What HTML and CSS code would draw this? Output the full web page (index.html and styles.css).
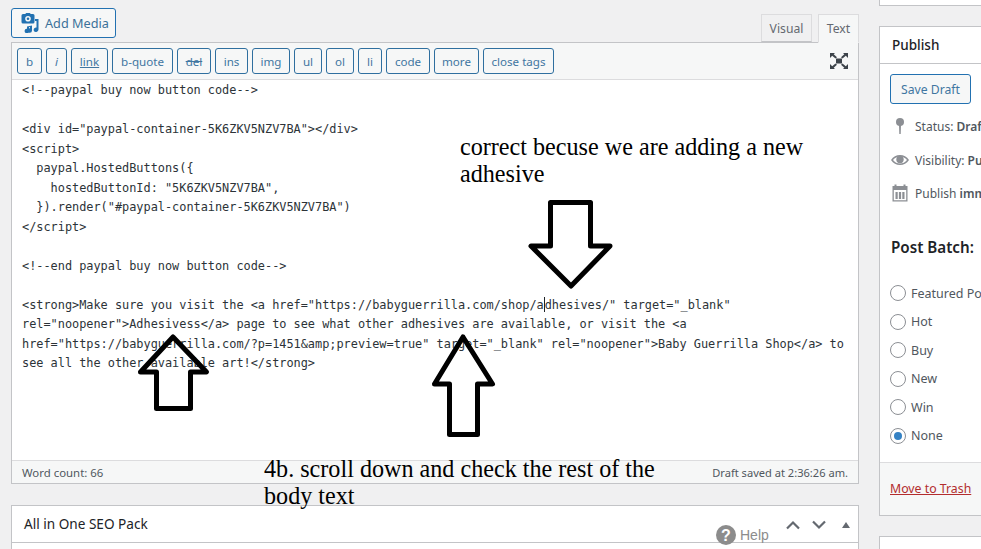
FILE: index.html
```html
<!DOCTYPE html>
<html lang="en">
<head>
<meta charset="utf-8">
<title>Edit Post</title>
<link rel="stylesheet" href="styles.css">
</head>
<body>
<div class="page">
  <main class="main">
    <div class="editor-head">
      <button class="btn add-media">
        <svg class="media-icon" viewBox="0 0 20 20" width="20" height="20"><path fill="#2271b1" d="M3 1h2.200l1-1h3.600l1 1H13a1.500 1.500 0 0 1 1.500 1.500V9a1.500 1.500 0 0 1-1.500 1.500H3A1.500 1.500 0 0 1 1.500 9V2.500A1.500 1.500 0 0 1 3 1zm5 2a2.800 2.800 0 1 0 0 5.600A2.800 2.800 0 0 0 8 3z"/><circle cx="8" cy="5.800" r="1.300" fill="#2271b1"/><path fill="#2271b1" d="M15 6h3.500v10.500a2.500 2.500 0 0 1-4.800 1 2.500 2.500 0 0 1 2.800-3V8H15zM7 13.500l5-1v5a2.200 2.200 0 1 1-2-2.200v-1.300l-1 .2V18a2.200 2.200 0 1 1-2-2.200z"/></svg>
        Add Media
      </button>
      <div class="tabs">
        <span class="tab tab-visual">Visual</span>
        <span class="tab tab-text">Text</span>
      </div>
    </div>
    <section class="editor">
      <div class="toolbar">
        <div class="qt-buttons">
          <button class="qt w-b">b</button>
          <button class="qt w-i"><i>i</i></button>
          <button class="qt w-link"><u>link</u></button>
          <button class="qt w-quote">b-quote</button>
          <button class="qt w-del"><s>del</s></button>
          <button class="qt w-ins">ins</button>
          <button class="qt w-img">img</button>
          <button class="qt w-ul">ul</button>
          <button class="qt w-ol">ol</button>
          <button class="qt w-li">li</button>
          <button class="qt w-code">code</button>
          <button class="qt w-more">more</button>
          <button class="qt w-close">close tags</button>
        </div>
        <svg class="fullscreen" viewBox="0 0 18 16" width="18" height="16"><path fill="#3c434a" d="M0 0h5L3.700 1.300 7 4.200 5.500 5.600 2.200 2.700 0 5zM18 0h-5l1.300 1.300L11 4.200l1.500 1.400 3.300-2.900L18 5zM0 16h5l-1.300-1.300L7 11.800l-1.500-1.400-3.300 2.900L0 11zM18 16h-5l1.300-1.300-3.300-2.900 1.500-1.400 3.300 2.900L18 11zM6 5.500h6v5H6z"/></svg>
      </div>
      <pre class="code">&lt;!--paypal buy now button code--&gt;

&lt;div id="paypal-container-5K6ZKV5NZV7BA"&gt;&lt;/div&gt;
&lt;script&gt;
  paypal.HostedButtons({
    hostedButtonId: "5K6ZKV5NZV7BA",
  }).render("#paypal-container-5K6ZKV5NZV7BA")
&lt;/script&gt;

&lt;!--end paypal buy now button code--&gt;

&lt;strong&gt;Make sure you visit the &lt;a href="https://babyguerrilla.com/shop/a<span class="caret"></span>dhesives/" target="_blank"
rel="noopener"&gt;Adhesivess&lt;/a&gt; page to see what other adhesives are available, or visit the &lt;a
href="https://babyguerrilla.com/?p=1451&amp;amp;preview=true" target="_blank" rel="noopener"&gt;Baby Guerrilla Shop&lt;/a&gt; to
see all the other available art!&lt;/strong&gt;</pre>
      <div class="status">
        <span class="word-count">Word count: 66</span>
        <span class="saved">Draft saved at 2:36:26 am.</span>
      </div>
    </section>
    <section class="seo">
      <h2 class="seo-title">All in One SEO Pack</h2>
      <div class="seo-controls">
        <svg viewBox="0 0 14 10" width="14" height="10"><path d="M1 8.500 7 2.500l6 6" fill="none" stroke="#646970" stroke-width="2.200"/></svg>
        <svg class="ctl-down" viewBox="0 0 14 10" width="14" height="10"><path d="M1 1.500l6 6 6-6" fill="none" stroke="#646970" stroke-width="2.200"/></svg>
        <svg class="ctl-tri" viewBox="0 0 8 6" width="8" height="6"><path d="M4 0l4 6H0z" fill="#646970"/></svg>
      </div>
    </section>
  </main>
  <aside class="side">
    <div class="box-stub"></div>
    <section class="publish">
      <h2 class="publish-title">Publish</h2>
      <div class="publish-body">
        <button class="btn save-draft">Save Draft</button>
        <div class="meta meta-status">
          <svg class="meta-icon" viewBox="0 0 20 20" width="20" height="20"><circle cx="10" cy="6" r="4" fill="#8c8f94"/><path d="M9 8h2l-.3 10H9.300z" fill="#8c8f94"/></svg>
          <span>Status: <b>Draft</b> Edit</span>
        </div>
        <div class="meta meta-vis">
          <svg class="meta-icon" viewBox="0 0 20 20" width="20" height="20"><path fill="#8c8f94" d="M1 10c2.200-3.400 5.300-5 9-5s6.800 1.600 9 5c-2.200 3.400-5.300 5-9 5s-6.800-1.600-9-5zm2 0c1.800 2.300 4.200 3.600 7 3.600s5.200-1.300 7-3.600c-1.800-2.300-4.200-3.600-7-3.600S4.800 7.700 3 10z"/><circle cx="10" cy="9.500" r="3.700" fill="#8c8f94"/></svg>
          <span>Visibility: <b>Public</b> Edit</span>
        </div>
        <div class="meta meta-date">
          <svg class="meta-icon" viewBox="0 0 20 20" width="20" height="20"><path fill="#8c8f94" d="M2.500 3h2V1.500h2V3h7V1.500h2V3h2v15.500h-15zm1.300 4v10.200h12.400V7zM5.500 9h2.200v7H5.500zm3.400 0h2.200v7H8.900zm3.400 0h2.200v7h-2.200z"/></svg>
          <span>Publish <b>immediately</b> Edit</span>
        </div>
        <h3 class="batch-title">Post Batch:</h3>
        <form class="batch">
          <label class="radio"><input type="radio" name="batch">Featured Post</label>
          <label class="radio"><input type="radio" name="batch">Hot</label>
          <label class="radio"><input type="radio" name="batch">Buy</label>
          <label class="radio"><input type="radio" name="batch">New</label>
          <label class="radio"><input type="radio" name="batch">Win</label>
          <label class="radio"><input type="radio" name="batch" checked>None</label>
        </form>
      </div>
      <div class="publish-foot"><a class="trash" href="#">Move to Trash</a></div>
    </section>
    <div class="box-next"></div>
  </aside>
  <p class="note note-top">correct becuse we are adding a new adhesive</p>
  <p class="note note-bottom">4b. scroll down and check the rest of the body text</p>
  <svg class="arrows" viewBox="0 0 981 549" width="981" height="549">
    <path d="M550.500 202.500H590.500V246H610L571 286 531 246H550.500Z"/>
    <path d="M463 337 492.500 384H477.500V434.500H449.500V384H434.500Z"/>
    <path d="M173 337 206.500 372H190.500V408.500H156.500V372H140.500Z"/>
  </svg>
  <div class="help">
    <svg viewBox="0 0 20 20" width="20" height="20"><circle cx="10" cy="10" r="10" fill="#8c8c8c"/><text x="10" y="15.500" text-anchor="middle" class="help-q">?</text></svg>
    <span>Help</span>
  </div>
</div>
</body>
</html>
```

FILE: styles.css
```css
* { box-sizing: border-box; }
html, body { margin: 0; padding: 0; height: 100%; }
body {
  background: #f0f0f1;
  color: #3c434a;
  font-family: "Noto Sans", "Open Sans", sans-serif;
  font-size: 13px;
  overflow: hidden;
}
.page {
  position: relative;
  display: flex;
  width: 981px;
  height: 549px;
  overflow: hidden;
  padding-left: 11px;
}
.main { flex: 0 0 848px; padding-top: 8px; }
.btn {
  font: inherit;
  color: #2271b1;
  background: #f6f7f7;
  border: 1px solid #2271b1;
  border-radius: 3px;
  padding: 0;
}
.editor-head {
  display: flex;
  justify-content: space-between;
  align-items: flex-end;
  height: 35px;
  position: relative;
  z-index: 1;
}
.add-media {
  display: flex;
  align-items: center;
  gap: 5px;
  width: 105px;
  height: 30px;
  padding-left: 8px;
  align-self: flex-start;
  color: #3b7199;
  font-size: 12.700px;
}
.media-icon { flex: none; }
.tabs { display: flex; gap: 6px; align-items: flex-end; }
.tab {
  display: flex;
  align-items: center;
  justify-content: center;
  border: 1px solid #dcdcde;
  color: #646970;
  font-size: 12.200px;
}
.tab-visual { width: 51px; height: 28px; background: #f0f0f1; margin-bottom: 1px; border-bottom-color: #c3c4c7; }
.tab-text { width: 41px; height: 29px; background: #f6f7f7; border-color: #dcdcde #dcdcde #f6f7f7; }
.editor {
  border: 1px solid #c3c4c7;
  background: #fff;
  height: 442px;
  margin-top: -1px;
  display: flex;
  flex-direction: column;
}
.toolbar {
  flex: none;
  height: 37px;
  background: #f6f7f7;
  border-bottom: 1px solid #dcdcde;
  display: flex;
  justify-content: space-between;
  align-items: center;
  padding: 0 10px 0 5px;
}
.qt-buttons { display: flex; gap: 4px; }
.qt {
  font: inherit;
  font-size: 11.600px;
  height: 26px;
  padding: 0;
  color: #3f76a1;
  background: #f6f7f7;
  border: 1px solid #2f6f9f;
  border-radius: 3px;
}
.w-b { width: 25px; }
.w-i { width: 21px; }
.w-link { width: 37px; }
.w-quote { width: 61px; }
.w-del { width: 34px; }
.w-ins { width: 33px; }
.w-img { width: 38px; }
.w-ul { width: 28px; }
.w-ol { width: 28px; }
.w-li { width: 24px; }
.w-code { width: 44px; }
.w-more { width: 45px; }
.w-close { width: 71px; }
.code {
  flex: 1;
  margin: 0;
  padding: 1px 0 0 10px;
  font-family: "DejaVu Sans Mono", "Liberation Mono", monospace;
  font-size: 11.900px;
  letter-spacing: -0.012px;
  line-height: 19.500px;
  color: #2c3338;
  white-space: pre;
  overflow: hidden;
}
.caret {
  display: inline-block;
  width: 0;
  height: 15px;
  border-left: 1px solid #1d2327;
  vertical-align: -3px;
}
.status {
  flex: none;
  height: 23px;
  background: #f6f7f7;
  border-top: 1px solid #dcdcde;
  display: flex;
  justify-content: space-between;
  align-items: center;
  padding: 0 10px;
  color: #50575e;
}
.word-count { font-size: 11.400px; }
.saved { font-size: 11.100px; }
.seo {
  position: relative;
  margin-top: 21px;
  height: 60px;
  background: #fff;
  border: 1px solid #c3c4c7;
}
.seo-title {
  margin: 0;
  height: 37px;
  padding: 0 12px 2px;
  display: flex;
  align-items: center;
  font-size: 13.600px;
  font-weight: 400;
  color: #1d2327;
  border-bottom: 1px solid #c3c4c7;
}
.seo-controls {
  position: absolute;
  top: 14px;
  right: 8px;
  display: flex;
  align-items: center;
}
.ctl-down { margin-left: 12px; }
.ctl-tri { margin-left: 16px; }
.side { flex: 0 0 280px; margin-left: 20px; }
.box-stub {
  height: 6px;
  background: #fff;
  border: 1px solid #c3c4c7;
  border-top: 0;
}
.publish {
  margin-top: 20px;
  height: 490px;
  background: #fff;
  border: 1px solid #c3c4c7;
  display: flex;
  flex-direction: column;
}
.publish-title {
  margin: 0;
  height: 37px;
  flex: none;
  padding: 0 12px;
  display: flex;
  align-items: center;
  font-size: 13.500px;
  font-weight: 500;
  color: #1d2327;
  border-bottom: 1px solid #c3c4c7;
}
.publish-body { flex: 1; padding: 10px; }
.save-draft {
  display: block;
  width: 81px;
  height: 30px;
  color: #3f76a1;
  font-size: 12.200px;
}
.meta {
  display: flex;
  align-items: center;
  gap: 5px;
  height: 20px;
  white-space: nowrap;
  font-size: 12px;
  color: #50575e;
}
.meta b { font-weight: 600; }
.meta-icon { flex: none; }
.meta-status { margin-top: 12px; }
.meta-vis { margin-top: 14px; }
.meta-date { margin-top: 13px; }
.batch-title {
  margin: 34px 0 0 1px;
  font-size: 15.200px;
  line-height: 20px;
  font-weight: 600;
  color: #1d2327;
}
.batch {
  margin-top: 26px;
  display: flex;
  flex-direction: column;
  gap: 8.600px;
}
.radio {
  display: flex;
  align-items: center;
  gap: 5px;
  height: 20px;
  white-space: nowrap;
  color: #50575e;
  font-size: 12.500px;
}
.radio input {
  appearance: none;
  margin: 0;
  width: 16px;
  height: 16px;
  border: 1px solid #8c8f94;
  border-radius: 50%;
  background: #fff;
  display: grid;
  place-items: center;
}
.radio input:checked::before {
  content: "";
  width: 8px;
  height: 8px;
  border-radius: 50%;
  background: #3582c4;
}
.publish-foot {
  flex: none;
  height: 53px;
  padding: 16px 10px 0;
  background: #f6f7f7;
  border-top: 1px solid #dcdcde;
}
.trash { color: #b32d2e; font-size: 12.300px; }
.box-next {
  margin-top: 20px;
  height: 40px;
  background: #fff;
  border: 1px solid #c3c4c7;
}
.note {
  position: absolute;
  margin: 0;
  font-family: "Liberation Serif", serif;
  font-size: 24.150px;
  line-height: 27px;
  color: #000;
}
.note-top { left: 460px; top: 133px; width: 360px; }
.note-bottom { left: 264px; top: 455px; width: 410px; }
.arrows { position: absolute; left: 0; top: 0; pointer-events: none; }
.arrows path {
  fill: none;
  stroke: #000;
  stroke-width: 5;
  stroke-linejoin: round;
}
.help {
  position: absolute;
  left: 716px;
  top: 525px;
  display: flex;
  align-items: center;
  gap: 4px;
  color: #8c8c8c;
  font-family: "Liberation Sans", sans-serif;
  font-size: 14px;
}
.help-q { fill: #fff; font-family: "Liberation Sans", sans-serif; font-size: 16px; font-weight: 700; }
```
